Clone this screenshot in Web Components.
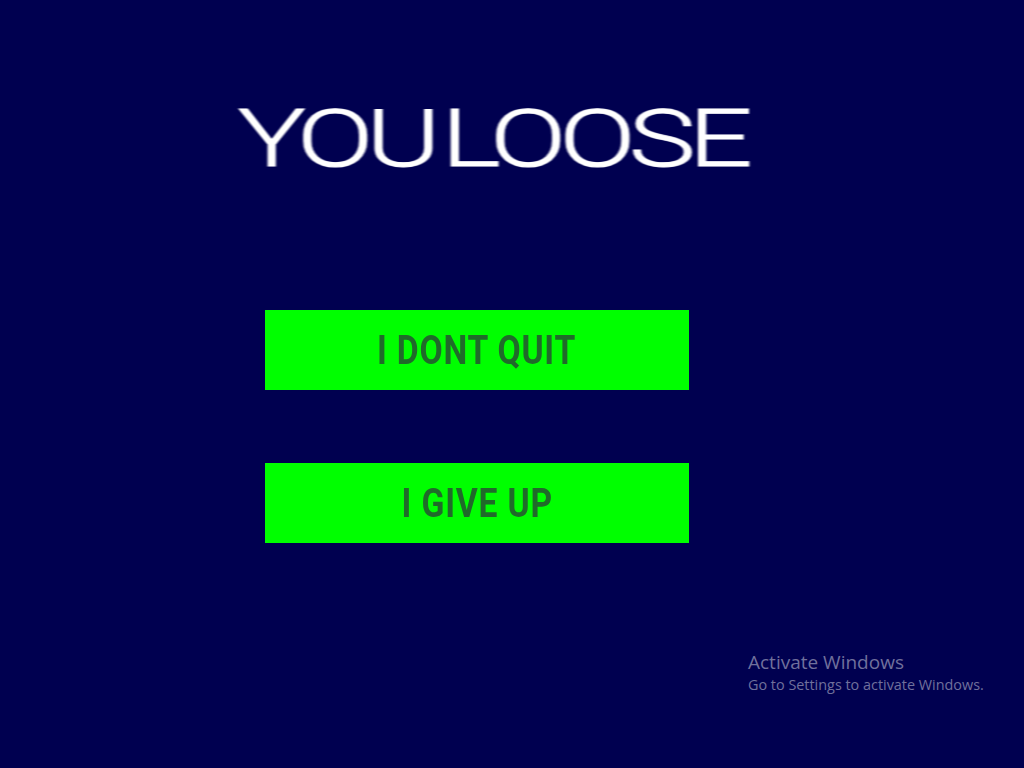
<!DOCTYPE html>
<html>
<head>
<meta charset="utf-8">
<title>You Loose</title>
<style>
  html, body { margin: 0; height: 100%; background: #000050; }
</style>
</head>
<body>
<game-over-screen>
  <game-title slot="title">YOU LOOSE</game-title>
  <game-button>I DONT QUIT</game-button>
  <game-button>I GIVE UP</game-button>
</game-over-screen>
<activate-watermark></activate-watermark>

<script>
  class GameOverScreen extends HTMLElement {
    constructor() {
      super();
      this.attachShadow({ mode: 'open' }).innerHTML = `
        <style>
          :host { display: block; height: 768px; box-sizing: border-box; padding: 102px 0 0 265px; overflow: hidden; }
          .buttons { display: flex; flex-direction: column; gap: 73px; margin-top: 133px; }
        </style>
        <slot name="title"></slot>
        <div class="buttons"><slot></slot></div>
      `;
    }
  }

  class GameTitle extends HTMLElement {
    constructor() {
      super();
      this.attachShadow({ mode: 'open' }).innerHTML = `
        <style>
          :host { display: block; height: 75px; margin-left: -27px; width: 514px; }
          .t {
            display: inline-block;
            font: 300 80px/75px Roboto, "Liberation Sans", sans-serif;
            color: #fff;
            -webkit-text-stroke: 1px #fff;
            white-space: nowrap;
            letter-spacing: -5px;
            word-spacing: -9px;
            transform-origin: 0 50%;
            transform: scaleX(1.41);
            filter: blur(0.7px);
          }
        </style>
        <span class="t"><slot></slot></span>
      `;
    }
  }

  class GameButton extends HTMLElement {
    constructor() {
      super();
      this.attachShadow({ mode: 'open' }).innerHTML = `
        <style>
          :host { display: flex; align-items: center; justify-content: center; width: 424px; height: 80px; background: #00ff00; }
          .l {
            display: inline-block;
            font: 700 41px/80px Roboto, "Liberation Sans", sans-serif;
            color: #206a2a;
            letter-spacing: 1px;
            transform: scaleX(0.82);
          }
        </style>
        <span class="l"><slot></slot></span>
      `;
    }
  }

  class ActivateWatermark extends HTMLElement {
    constructor() {
      super();
      this.attachShadow({ mode: 'open' }).innerHTML = `
        <style>
          :host { position: absolute; left: 748px; top: 650px; color: #70709c; font-family: "Open Sans", "Noto Sans", sans-serif; white-space: nowrap; }
          .a { font-size: 19px; line-height: 24px; }
          .b { font-size: 14.4px; line-height: 22px; }
        </style>
        <div class="a">Activate Windows</div>
        <div class="b">Go to Settings to activate Windows.</div>
      `;
    }
  }

  customElements.define('game-over-screen', GameOverScreen);
  customElements.define('game-title', GameTitle);
  customElements.define('game-button', GameButton);
  customElements.define('activate-watermark', ActivateWatermark);
</script>
</body>
</html>
